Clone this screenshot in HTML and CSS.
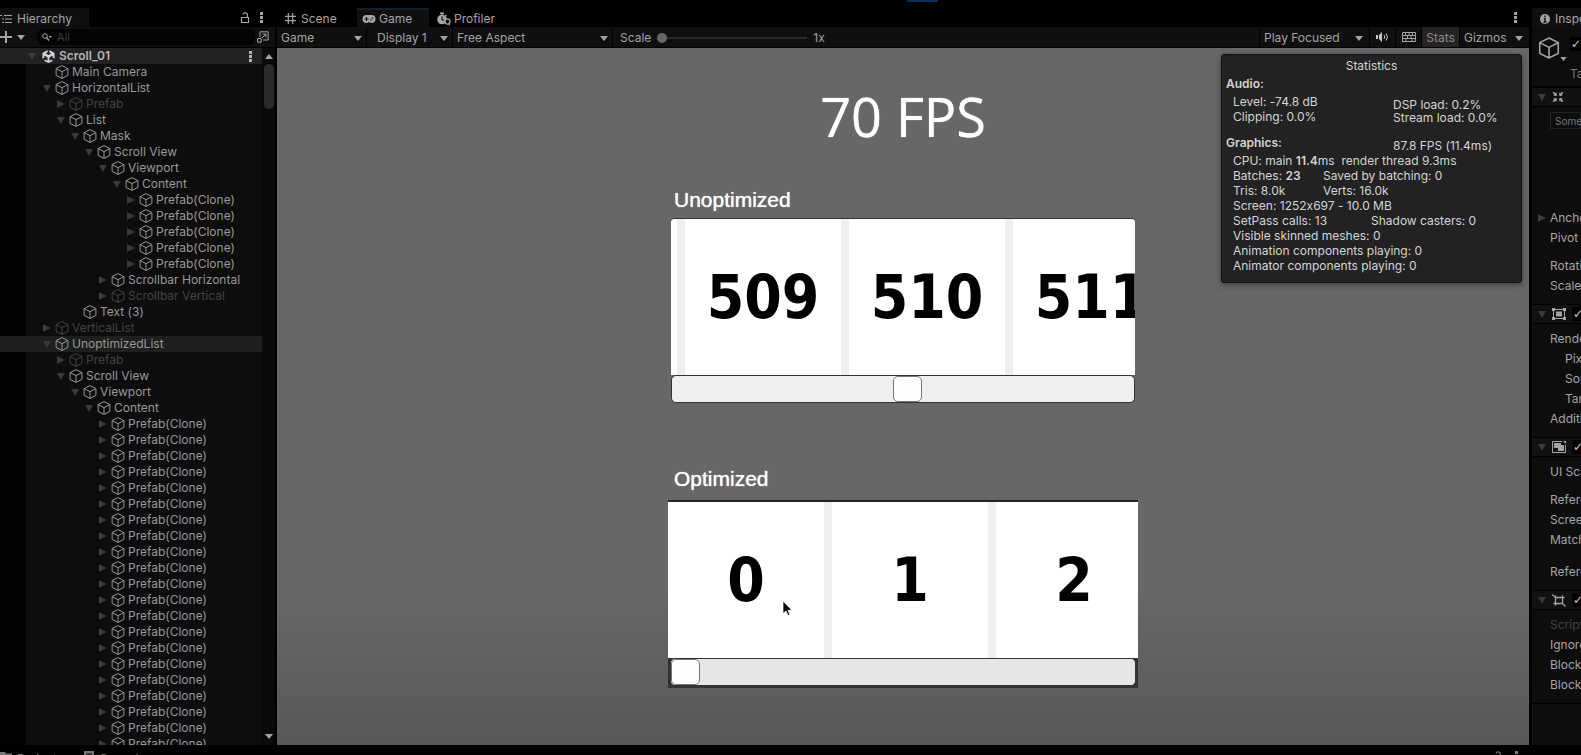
FILE: index.html
```html
<!DOCTYPE html>
<html lang="en">
<head>
    <meta charset="utf-8">
    <title>Scroll_01 - Editor</title>
    <link rel="stylesheet" href="styles.css">
</head>
<body>

<!-- shared icons -->
<svg class="sprite" aria-hidden="true">
    <symbol id="cube" viewBox="0 0 14 14">
        <path d="M7 .6 12.900 3.600V10.400L7 13.400 1.100 10.400V3.600ZM1.100 3.600 7 6.600 12.900 3.600M7 6.600V13.400" fill="none" stroke="currentColor" stroke-linejoin="round"/>
    </symbol>
    <symbol id="down" viewBox="0 0 8 8"><path d="M0 1H8L4 8Z" fill="currentColor"/></symbol>
    <symbol id="right" viewBox="0 0 8 8"><path d="M0 0V8L8 4Z" fill="currentColor"/></symbol>
    <symbol id="caret" viewBox="0 0 8 5"><path d="M0 0H8L4 5Z" fill="currentColor"/></symbol>
    <symbol id="dots" viewBox="0 0 3 11"><path d="M0 0H3V3H0ZM0 4H3V7H0ZM0 8H3V11H0Z" fill="currentColor"/></symbol>
    <symbol id="lock" viewBox="0 0 10 12"><path d="M1.5 5.5H8.5V10.5H1.5ZM7.500 5V3A2.300 2.300 0 0 0 3 2.500" fill="none" stroke="currentColor" stroke-width="1.2"/></symbol>
</svg>

<div class="top-strip"><span class="play-mark"></span></div>

<main class="editor">
    <section class="hierarchy">
        <header class="tabs">
            <button class="tab tab-hierarchy">
                <svg width="12" height="10" viewBox="0 0 12 10"><path d="M0 1.5H2M4 1.5H12M2 5H4M5 5H12M2 8.5H4M5 8.5H12" stroke="currentColor" stroke-width="1.2"/></svg>
                Hierarchy
            </button>
            <span class="tab-tools">
                <svg width="10" height="12"><use href="#lock"/></svg>
                <svg width="3" height="11"><use href="#dots"/></svg>
            </span>
        </header>
        <div class="search-bar">
            <button class="add" aria-label="Add">
                <svg width="12" height="12" viewBox="0 0 12 12"><path d="M6 0V12M0 6H12" stroke="currentColor" stroke-width="2"/></svg>
                <svg width="8" height="5"><use href="#caret"/></svg>
            </button>
            <label class="search">
                <svg width="10" height="8" viewBox="0 0 10 8"><circle cx="3" cy="3" r="2.3" fill="none" stroke="currentColor"/><path d="M4.6 4.6 7 7.5" stroke="currentColor" stroke-width="1.3"/><path d="M6.5 3H10L8.2 5Z" fill="currentColor"/></svg>
                <input type="text" placeholder="All" aria-label="Search hierarchy">
            </label>
            <svg class="picker" width="12" height="12" viewBox="0 0 12 12"><path d="M3 6V.8H11.2V9H6M5 7 9 3M5.5 3H9V6.5M.7 7.5H4.2V11.2H.7Z" fill="none" stroke="currentColor"/></svg>
        </div>
        <div class="tree-wrap">
            <ul class="tree" id="tree"></ul>
            <div class="tree-scroll">
                <svg class="flip" width="8" height="5"><use href="#caret"/></svg>
                <span class="tree-thumb"></span>
                <svg width="8" height="5"><use href="#caret"/></svg>
            </div>
        </div>
    </section>

    <section class="game">
        <header class="tabs">
            <button class="tab">
                <svg width="11" height="11" viewBox="0 0 10 10"><path d="M3 0V10M7 0V10M0 3H10M0 7H10" stroke="currentColor" stroke-width="1.1"/></svg>
                Scene
            </button>
            <button class="tab tab-active">
                <svg width="14" height="8" viewBox="0 0 13 8"><path d="M4 0H9A4 4 0 0 1 9 8Q7.500 8 6.500 6.800 5.500 8 4 8A4 4 0 0 1 4 0Z" fill="currentColor"/><path d="M2 4H6M4 2V6" stroke="#0f0f0f"/><circle cx="8.500" cy="5" r=".8" fill="#0f0f0f"/><circle cx="10" cy="3" r=".8" fill="#0f0f0f"/></svg>
                Game
            </button>
            <button class="tab tab-profiler">
                <svg width="14" height="14" viewBox="0 0 14 13"><circle cx="5" cy="7" r="4.800" fill="currentColor"/><path d="M3 .8H7M5 1V3M8.300 2.500 9.500 3.700" stroke="currentColor" stroke-width="1.400"/><path d="M5 4V7.500H7" fill="none" stroke="#000"/><circle cx="10.500" cy="9" r="2.600" fill="#000" stroke="currentColor" stroke-width="1.200"/><path d="M12.300 10V13" stroke="currentColor" stroke-width="1.200"/></svg>
                Profiler
            </button>
            <span class="tab-tools"><svg width="3" height="11"><use href="#dots"/></svg></span>
        </header>
        <div class="toolbar">
            <button class="drop drop-view">Game <svg width="8" height="5"><use href="#caret"/></svg></button>
            <button class="drop drop-display">Display 1 <svg width="8" height="5"><use href="#caret"/></svg></button>
            <button class="drop drop-aspect">Free Aspect <svg width="8" height="5"><use href="#caret"/></svg></button>
            <label class="scale">Scale <input type="range" class="scale-range" min="0" max="100" value="0"> 1x</label>
            <span class="toolbar-space"></span>
            <button class="drop drop-play">Play Focused <svg width="8" height="5"><use href="#caret"/></svg></button>
            <button class="tool tool-mute" aria-label="Mute">
                <svg width="13" height="10" viewBox="0 0 13 10"><path d="M0 3H2V7H0ZM3 3 6 0V10L3 7Z" fill="currentColor"/><path d="M8 3Q9.500 5 8 7M10 1.500Q13 5 10 8.500" fill="none" stroke="currentColor"/></svg>
            </button>
            <button class="tool" aria-label="Shortcuts">
                <svg width="14" height="10" viewBox="0 0 14 10"><path d="M.5 .5H13.500V9.500H.5ZM.5 3.500H13.500M.5 6.500H13.500M3.500 .5V3.500M7 .5V3.500M10.500 .5V3.500M5.500 3.500V6.500M9 3.500V6.500M4 6.500V9.500M10 6.500V9.500" fill="none" stroke="currentColor"/></svg>
            </button>
            <button class="tool tool-stats">Stats</button>
            <button class="drop drop-gizmos">Gizmos <svg width="8" height="5"><use href="#caret"/></svg></button>
        </div>

        <div class="view">
            <div class="stage">
                <h1 class="fps">70 FPS</h1>

                <h2 class="list-title">Unoptimized</h2>
                <div class="list list-rounded">
                    <div class="cells cells-scrolled">
                        <div class="cell"></div>
                        <div class="cell">509</div>
                        <div class="cell">510</div>
                        <div class="cell">511</div>
                    </div>
                    <input type="range" class="bar" min="0" max="100" value="51" aria-label="Unoptimized scroll">
                </div>

                <h2 class="list-title">Optimized</h2>
                <div class="list list-square">
                    <div class="cells">
                        <div class="cell">0</div>
                        <div class="cell">1</div>
                        <div class="cell">2</div>
                    </div>
                    <input type="range" class="bar" min="0" max="100" value="0" aria-label="Optimized scroll">
                    <svg class="cursor" width="11" height="17" viewBox="0 0 11 17"><path d="M1 1V13.500L4 11 6.200 15.500 8 14.600 6 10.300H10Z" fill="#000" stroke="#fff" stroke-width=".8"/></svg>
                </div>
            </div>

            <aside class="stats">
                <h3 class="stats-title">Statistics</h3>
                <h4>Audio:</h4>
                <div class="audio">
                    <p>Level: -74.8 dB<br>Clipping: 0.0%</p>
                    <p class="audio-load">DSP load: 0.2%<br>Stream load: 0.0%</p>
                </div>
                <div class="graphics">
                    <h4>Graphics:</h4>
                    <p>87.8 FPS (11.4ms)</p>
                </div>
                <div class="stats-lines">
                    <p>CPU: main <b>11.4</b>ms&nbsp; render thread 9.3ms</p>
                    <p class="pair"><span>Batches: <b>23</b></span><span>Saved by batching: 0</span></p>
                    <p class="pair"><span>Tris: 8.0k</span><span>Verts: 16.0k</span></p>
                    <p>Screen: 1252x697 - 10.0 MB</p>
                    <p class="pair pair-wide"><span>SetPass calls: 13</span><span>Shadow casters: 0</span></p>
                    <p>Visible skinned meshes: 0</p>
                    <p>Animation components playing: 0</p>
                    <p>Animator components playing: 0</p>
                </div>
            </aside>
        </div>
    </section>

    <section class="inspector">
        <header class="inspector-tab">
            <svg width="10" height="10" viewBox="0 0 10 10"><circle cx="5" cy="5" r="5" fill="currentColor"/><path d="M5 1.500V3M3.800 4.500H5V8M3.500 8H6.500" stroke="#0f0f0f" stroke-width="1.400" fill="none"/></svg>
            Inspector
        </header>
        <div class="object">
            <svg width="22" height="22"><use href="#cube"/></svg>
            <svg class="object-caret" width="7" height="4" viewBox="0 0 8 5"><use href="#caret"/></svg>
            <input type="checkbox" checked aria-label="Active">
            <span class="object-tag">Tag</span>
        </div>
        <div class="component">
            <svg class="fold" width="8" height="8"><use href="#down"/></svg>
            <svg width="12" height="12" viewBox="0 0 14 14"><path d="M1.500 1.500 5 5M12.500 1.500 9 5M1.500 12.500 5 9M12.500 12.500 9 9" stroke="currentColor" stroke-width="2"/><path d="M5.500 1.500V5.500H1.500ZM8.500 1.500V5.500H12.500ZM5.500 12.500V8.500H1.500ZM8.500 12.500V8.500H12.500Z" fill="currentColor"/></svg>
        </div>
        <div class="props props-rect">
            <div class="note">Some values</div>
            <p class="anchors"><svg width="8" height="8"><use href="#right"/></svg>Anchors</p>
            <p>Pivot</p>
            <p class="gap">Rotation</p>
            <p>Scale</p>
        </div>
        <div class="component">
            <svg class="fold" width="8" height="8"><use href="#down"/></svg>
            <svg width="14" height="12" viewBox="0 0 14 12"><path d="M1.500 1.500H12.500V10.500H1.500Z" fill="none" stroke="currentColor"/><path d="M4 3.500H10V8.500H4ZM0 0H3V3H0ZM11 0H14V3H11ZM0 9H3V12H0ZM11 9H14V12H11Z" fill="currentColor"/></svg>
            <input type="checkbox" checked aria-label="Canvas">
        </div>
        <div class="props">
            <p>Render Mode</p>
            <p class="sub">Pixel</p>
            <p class="sub">Sort</p>
            <p class="sub">Target</p>
            <p>Additional</p>
        </div>
        <div class="component">
            <svg class="fold" width="8" height="8"><use href="#down"/></svg>
            <svg width="14" height="12" viewBox="0 0 14 12"><path d="M13.500 4V11.500H.5V.5H10" fill="none" stroke="currentColor"/><path d="M2 2H9V4H12V10H6V7H2ZM11 0H14V3Z" fill="currentColor"/></svg>
            <input type="checkbox" checked aria-label="Canvas Scaler">
        </div>
        <div class="props">
            <p>UI Scale</p>
            <p class="gap">Reference</p>
            <p>Screen</p>
            <p>Match</p>
            <p class="gap gap-big">Reference</p>
        </div>
        <div class="component">
            <svg class="fold" width="8" height="8"><use href="#down"/></svg>
            <svg width="14" height="13" viewBox="0 0 14 13"><path d="M3.500 3.500H10.500V9.500H3.500ZM0 .5 3.500 3.500M10.500 9.500 13.500 12.500M3.500 1.500V3.500M10.500 1.500V3.500H12.500M1.500 9.500H3.500V11.500" fill="none" stroke="currentColor" stroke-width="1.300"/></svg>
            <input type="checkbox" checked aria-label="Graphic Raycaster">
        </div>
        <div class="props props-last">
            <p class="off">Script</p>
            <p>Ignore</p>
            <p>Blocking</p>
            <p>Blocking</p>
        </div>
    </section>
</main>

<footer class="bottom">
    <button class="bottom-tab bottom-tab-on">
        <svg width="12" height="10" viewBox="0 0 12 10"><path d="M0 1H5L6 2.500H12V10H0Z" fill="currentColor"/></svg>
        Project
    </button>
    <button class="bottom-tab">
        <svg width="10" height="10" viewBox="0 0 10 10"><path d="M0 0H10V10H0Z" fill="currentColor"/><path d="M2 3H8M2 6H8" stroke="#000"/></svg>
        Console
    </button>
    <span class="bottom-tools">
        <svg width="10" height="12"><use href="#lock"/></svg>
        <svg width="3" height="11"><use href="#dots"/></svg>
    </span>
</footer>

<script>
    // level, name, arrow (d = open, r = closed), state
    const rows = [
        [1, 'Main Camera', '', ''],
        [1, 'HorizontalList', 'd', ''],
        [2, 'Prefab', 'r', 'off'],
        [2, 'List', 'd', ''],
        [3, 'Mask', 'd', ''],
        [4, 'Scroll View', 'd', ''],
        [5, 'Viewport', 'd', ''],
        [6, 'Content', 'd', '']
    ];
    for (let i = 0; i < 5; i++) rows.push([7, 'Prefab(Clone)', 'r', '']);
    rows.push(
        [5, 'Scrollbar Horizontal', 'r', ''],
        [5, 'Scrollbar Vertical', 'r', 'off'],
        [3, 'Text (3)', '', ''],
        [1, 'VerticalList', 'r', 'off'],
        [1, 'UnoptimizedList', 'd', 'selected'],
        [2, 'Prefab', 'r', 'off'],
        [2, 'Scroll View', 'd', ''],
        [3, 'Viewport', 'd', ''],
        [4, 'Content', 'd', '']
    );
    for (let i = 0; i < 21; i++) rows.push([5, 'Prefab(Clone)', 'r', '']);

    const arrows = { d: '#down', r: '#right' };
    let html = `<li class="row scene">
        <svg class="arrow" width="8" height="8"><use href="#down"/></svg>
        <svg class="logo" width="13" height="13" viewBox="0 0 14 14"><path d="M6 0 6 2.500 4 3.700 7 5.500 10 3.700 8 2.500V0L13.500 3.300V9.500L11.500 8.300V6L8 8V11.500L10 10.400 12 11.500 7 14 2 11.500 4 10.400 6 11.500V8L2.500 6V8.300L.5 9.500V3.300Z" fill="currentColor"/></svg>
        <span>Scroll_01</span>
        <svg class="more" width="3" height="11"><use href="#dots"/></svg></li>`;
    for (const [level, name, arrow, state] of rows) {
        html += `<li class="row ${state}" style="padding-left:${29 + level * 14}px">
            <svg class="arrow" width="8" height="8">${arrow ? `<use href="${arrows[arrow]}"/>` : ''}</svg>
            <svg class="node" width="14" height="14"><use href="#cube"/></svg>
            <span>${name}</span></li>`;
    }
    document.getElementById('tree').innerHTML = html;
</script>

</body>
</html>
```
FILE: styles.css
```css
* {
    box-sizing: border-box;
}
body {
    margin: 0;
    height: 100vh;
    display: flex;
    flex-direction: column;
    overflow: hidden;
    background: #000;
    color: #a4a4a4;
    font-family: Inter, sans-serif;
    font-size: 12px;
    line-height: 16px;
    font-variant-ligatures: no-contextual;
}
h1, h2, h3, h4, p, ul {
    margin: 0;
    padding: 0;
}
button, input {
    font: inherit;
    color: inherit;
    background: none;
    border: 0;
    margin: 0;
    padding: 0;
}
svg {
    flex: none;
    display: block;
}
.sprite {
    position: absolute;
    width: 0;
    height: 0;
}

.top-strip {
    flex: none;
    height: 8px;
    display: flex;
    padding-left: 907px;
}
.play-mark {
    width: 31px;
    height: 2px;
    background: #08305a;
}
.editor {
    flex: 1;
    min-height: 0;
    display: flex;
}

/* tabs */
.tabs {
    flex: none;
    height: 19px;
    display: flex;
    align-items: stretch;
}
.tab {
    display: flex;
    align-items: center;
    gap: 5px;
    padding: 2px 0 0;
}
.tab-tools {
    margin-left: auto;
    display: flex;
    align-items: center;
    gap: 10px;
    padding-right: 12px;
}

/* hierarchy */
.hierarchy {
    flex: none;
    width: 275px;
    margin-right: 2px;
    display: flex;
    flex-direction: column;
    background: #0d0d0d;
}
.hierarchy .tabs {
    background: #000;
}
.tab-hierarchy {
    width: 89px;
    background: #0f0f0f;
    border-radius: 0 3px 0 0;
}
.search-bar {
    flex: none;
    height: 21px;
    display: flex;
    align-items: center;
    border-bottom: 1px solid #000;
    background: #0f0f0f;
}
.add {
    width: 37px;
    display: flex;
    align-items: center;
    gap: 5px;
}
.search {
    flex: 1;
    height: 16px;
    display: flex;
    align-items: center;
    gap: 5px;
    padding-left: 5px;
    background: #040404;
    border-radius: 6px;
}
.search input {
    width: 150px;
    font-size: 11px;
    outline: none;
}
.search input::placeholder {
    color: #3c3c3c;
}
.picker {
    margin: 0 6px 0 2px;
}
.tree-wrap {
    flex: 1;
    min-height: 0;
    display: flex;
}
.tree {
    flex: 1;
    overflow: hidden;
    list-style: none;
    background: linear-gradient(90deg, #020202 26px, #0d0d0d 26px);
}
.row {
    height: 16px;
    display: flex;
    align-items: center;
    white-space: nowrap;
    color: #989898;
}
.arrow {
    margin-right: 4px;
    color: #3a3a3a;
}
.node {
    margin-right: 3px;
}
.scene {
    padding-left: 28px;
    background: #222;
    color: #b4b4b4;
    font-weight: 600;
}
.logo {
    margin: 0 4px 0 2px;
    color: #d6d6d6;
}
.more {
    margin: 0 10px 0 auto;
}
.off {
    color: #434343;
}
.selected {
    background: #1f1f1f;
}
.tree-scroll {
    width: 13px;
    display: flex;
    flex-direction: column;
    align-items: center;
    padding: 6px 0;
    background: #0a0a0a;
}
.flip {
    transform: rotate(180deg);
}
.tree-thumb {
    width: 10px;
    height: 45px;
    margin: 5px 0 auto;
    background: #2b2b2b;
    border-radius: 5px;
}

/* game */
.game {
    flex: 1;
    min-width: 0;
    display: flex;
    flex-direction: column;
}
.game > .tabs {
    padding-left: 8px;
    gap: 8px;
}
.game .tab {
    width: 64px;
}
.game .tab-active {
    width: 72px;
    padding: 0 0 0 5px;
    background: #0f0f0f;
    border-top: 2px solid #10202f;
    gap: 3px;
}
.game .tab-profiler {
    gap: 3px;
}
.toolbar {
    flex: none;
    height: 21px;
    display: flex;
    align-items: stretch;
    background: #0f0f0f;
    border-bottom: 1px solid #000;
}
.drop {
    display: flex;
    align-items: center;
    justify-content: space-between;
    padding: 2px 4px 0;
    border-right: 1px solid #000;
}
.drop-view {
    width: 90px;
}
.drop-display {
    width: 86px;
    padding-left: 10px;
}
.drop-aspect {
    width: 160px;
}
.scale {
    display: flex;
    align-items: center;
    padding: 2px 0 0 7px;
    gap: 6px;
}
.scale-range {
    appearance: none;
    width: 150px;
    height: 10px;
    background: linear-gradient(#2c2c2c, #2c2c2c) center / 100% 2px no-repeat;
}
.scale-range::-webkit-slider-thumb {
    appearance: none;
    width: 10px;
    height: 10px;
    border-radius: 50%;
    background: #666;
}
.toolbar-space {
    flex: 1;
}
.drop-play {
    width: 111px;
    padding: 2px 6px 0 4px;
    border-left: 1px solid #000;
}
.tool {
    width: 26px;
    display: flex;
    align-items: center;
    justify-content: center;
    border-right: 1px solid #000;
}
.tool-mute {
    color: #c8c8c8;
}
.tool-stats {
    width: 38px;
    padding-top: 2px;
    background: #242424;
    color: #888;
}
.drop-gizmos {
    width: 69px;
    padding: 2px 6px 0 4px;
    border: 0;
}

.view {
    position: relative;
    flex: 1;
    min-height: 0;
    background: linear-gradient(#676767 78%, #585858);
}
.stage {
    width: 470px;
    margin: 0 auto;
}
.fps {
    padding-top: 36px;
    text-align: center;
    font: 54px/64px "Open Sans", sans-serif;
    color: #fff;
    text-shadow: 0 0 1px #fff;
}
.list-title {
    padding: 36px 0 3px 6px;
    font: 21px/32px "Liberation Sans", sans-serif;
    color: #fff;
    text-shadow: 0 0 1px #fff;
}
.list {
    position: relative;
    display: flex;
    flex-direction: column;
}
.list-rounded {
    margin: 0 3px 24px;
}
.list-square {
    margin-top: 2px;
    padding-bottom: 2px;
    border-top: 2px solid #262626;
    background: #333;
}
.cells {
    height: 156px;
    display: flex;
    gap: 8px;
    overflow: hidden;
    background: #efefef;
}
.list-rounded .cells {
    border-radius: 4px 4px 0 0;
    box-shadow: 0 -1px #333;
}
.cells-scrolled {
    padding-left: 6px;
}
.cell {
    flex: none;
    width: 156px;
    height: 156px;
    text-align: center;
    background: #fff;
    color: #000;
    font: bold 60px/156px "DejaVu Sans Condensed", "DejaVu Sans", sans-serif;
}
.cells-scrolled .cell:first-child {
    margin-left: -156px;
}
.bar {
    appearance: none;
    height: 28px;
    border: 1px solid #333;
    border-radius: 5px;
    background: #efefef;
}
.list-square .bar {
    margin: 0 2px;
    background: #e6e6e6;
}
.bar::-webkit-slider-thumb {
    appearance: none;
    width: 29px;
    height: 26px;
    border: 1px solid #777;
    border-radius: 5px;
    background: #fdfdfd;
}
.cursor {
    position: absolute;
    left: 114px;
    top: 98px;
}

/* statistics overlay */
.stats {
    position: absolute;
    top: 6px;
    right: 7px;
    width: 301px;
    height: 229px;
    padding: 2px 4px;
    background: #222;
    border: 1px solid #111;
    border-radius: 3px;
    box-shadow: 0 2px 6px #0006;
    color: #d4d4d4;
    line-height: 15px;
}
.stats h3, .stats h4 {
    font-size: 12px;
    font-weight: 600;
    line-height: 18px;
}
.stats .stats-title {
    font-weight: 400;
    text-align: center;
}
.audio {
    display: grid;
    grid-template-columns: 160px 1fr;
    padding: 1px 0 0 7px;
}
.audio-load {
    padding-top: 4px;
    line-height: 13px;
}
.graphics {
    display: grid;
    grid-template-columns: 167px 1fr;
    padding-top: 10px;
}
.graphics p {
    padding-top: 4px;
}
.stats-lines {
    padding-left: 7px;
}
.pair {
    display: grid;
    grid-template-columns: 90px 1fr;
}
.pair-wide {
    grid-template-columns: 138px 1fr;
}
.stats b {
    font-weight: 600;
}

/* inspector */
.inspector {
    flex: none;
    width: 49px;
    margin-left: 3px;
    overflow: hidden;
    white-space: nowrap;
    background: #0d0d0d;
}
.inspector-tab {
    height: 19px;
    display: flex;
    align-items: center;
    gap: 5px;
    padding: 2px 0 0 8px;
    background: #0f0f0f;
}
.object {
    height: 60px;
    display: grid;
    grid-template-columns: 20px 8px 1fr;
    column-gap: 2px;
    align-items: start;
    padding: 10px 0 0 6px;
    border-bottom: 1px solid #000;
}
.object-caret {
    margin-top: 20px;
}
.object-tag {
    grid-column: 3;
    color: #777;
}
.component {
    height: 20px;
    display: flex;
    align-items: center;
    gap: 6px;
    padding-left: 6px;
    background: #111;
    border-top: 1px solid #000;
    border-bottom: 1px solid #000;
}
.fold, .anchors svg {
    color: #3a3a3a;
}
.inspector input {
    appearance: none;
    flex: none;
    width: 14px;
    height: 14px;
    background: #000;
    border-radius: 3px;
}
.inspector input::before {
    content: "✓";
    display: block;
    padding-left: 1px;
    font: bold 12px/14px "DejaVu Sans", sans-serif;
    color: #ccc;
}
.props {
    padding: 5px 0 8px 18px;
    line-height: 20px;
}
.props .gap {
    padding-top: 8px;
}
.props .gap-big {
    padding-top: 12px;
}
.props .sub {
    padding-left: 15px;
}
.note {
    height: 17px;
    margin-bottom: 79px;
    padding-left: 4px;
    font-size: 10px;
    line-height: 17px;
    border: 1px solid #222;
    color: #777;
}
.anchors {
    display: flex;
    align-items: center;
    gap: 4px;
    margin-left: -12px;
}
.props-last {
    border-bottom: 1px solid #000;
}

/* bottom tabs */
.bottom {
    flex: none;
    height: 10px;
    display: flex;
    align-items: flex-start;
    overflow: hidden;
    padding-top: 6px;
    color: #777;
}
.bottom-tab {
    width: 84px;
    display: flex;
    align-items: flex-start;
    gap: 5px;
}
.bottom-tools {
    display: flex;
    gap: 12px;
    margin-left: auto;
    padding-right: 63px;
}
```
